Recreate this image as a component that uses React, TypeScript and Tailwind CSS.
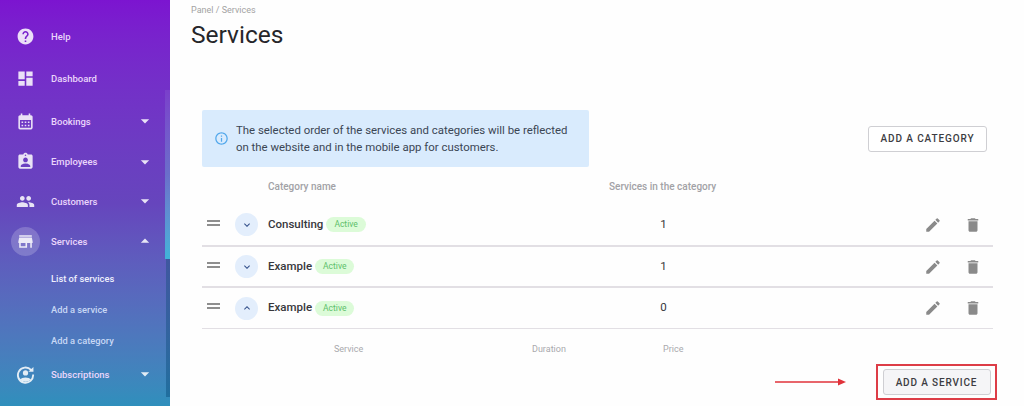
import { MdHelp, MdDashboard, MdCalendarMonth, MdAssignmentInd, MdPeople, MdStore, MdArrowDropDown, MdArrowDropUp, MdEdit, MdDelete, MdExpandMore, MdExpandLess, MdInfoOutline } from "react-icons/md";
import type { ReactNode } from "react";

function NavItem({ icon, label, h, caret, active }: { icon: ReactNode; label: string; h: string; caret?: "down" | "up"; active?: boolean }) {
  return (
    <div className={`flex items-center ${h}`}>
      <div className="w-[51px] flex justify-center shrink-0">
        <div className={`w-[29px] h-[29px] rounded-full flex items-center justify-center text-[19px] text-white/85 ${active ? "bg-white/20" : ""}`}>{icon}</div>
      </div>
      <span className="text-[9.5px] font-medium flex-1 pt-[2px]">{label}</span>
      {caret === "down" && <MdArrowDropDown className="text-[20px] mr-[15px] text-white/85" />}
      {caret === "up" && <MdArrowDropUp className="text-[20px] mr-[15px] text-white/85" />}
    </div>
  );
}

function SubscriptionIcon() {
  return (
    <svg viewBox="0 0 24 24" width="19" height="19" fill="currentColor">
      <path d="M19 6.2A9.6 9.6 0 1 0 21.6 12" fill="none" stroke="currentColor" strokeWidth="2.4" />
      <path d="M15.6 8.6H22V2.4Z" />
      <circle cx="12" cy="10" r="3.3" />
      <path d="M5.2 18.2C7.5 14.8 16.5 14.8 18.8 18.2A9.5 9.5 0 0 1 5.2 18.2Z" />
    </svg>
  );
}

function Row({ name, count, open, h, border, pad }: { name: string; count: string; open?: boolean; h: string; border: string; pad?: string }) {
  return (
    <div className={`flex items-center ${h} ${border} ${pad ?? ""} border-[#e2dfe4]`}>
      <div className="w-[33px] flex flex-col gap-[2px] pl-[5px] -mt-[4px] shrink-0">
        <div className="w-[13px] h-[2px] bg-[#8e8e8e]" />
        <div className="w-[13px] h-[2px] bg-[#8e8e8e]" />
      </div>
      <div className="w-[23px] h-[23px] rounded-full bg-[#e3eefc] flex items-center justify-center text-[#33508a] text-[12px] shrink-0">
        {open ? <MdExpandLess /> : <MdExpandMore />}
      </div>
      <div className="ml-[10px] w-[341px] flex items-center gap-[3px] shrink-0">
        <span className="text-[11.5px] font-medium text-[#37373c]">{name}</span>
        <span className="h-[15px] px-[8px] rounded-full bg-[#dcfbd8] text-[#5cc06a] text-[8.5px] leading-[15px]">Active</span>
      </div>
      <div className="w-[109px] text-center text-[11.5px] text-[#37373c] shrink-0">{count}</div>
      <div className="ml-auto flex items-center gap-[22px] pr-[11px] text-[#8a8a8a] text-[18px]">
        <MdEdit />
        <MdDelete />
      </div>
    </div>
  );
}

export default function App() {
  return (
    <div className="w-[1024px] h-[406px] overflow-hidden flex bg-[#fefefe] font-['Roboto',sans-serif]">
      <aside className="relative w-[170px] h-full shrink-0 pt-[15px] text-[#ead6fb] bg-gradient-to-b from-[#7c14d0] via-[#6645bd] to-[#2f8fbc]">
        <NavItem h="h-[42px]" label="Help" icon={<MdHelp />} />
        <NavItem h="h-[43px]" label="Dashboard" icon={<MdDashboard />} />
        <NavItem h="h-[42px]" label="Bookings" caret="down" icon={<MdCalendarMonth />} />
        <NavItem h="h-[39px]" label="Employees" caret="down" icon={<MdAssignmentInd />} />
        <NavItem h="h-[40px]" label="Customers" caret="down" icon={<MdPeople />} />
        <NavItem h="h-[40px]" label="Services" caret="up" active icon={<MdStore />} />
        <div className="pl-[51px] text-[9.3px] font-medium text-[#c8d8f5] flex flex-col">
          <div className="h-[31px] mt-[2px] flex items-center text-[#eef0fd]">List of services</div>
          <div className="h-[31px] flex items-center">Add a service</div>
          <div className="h-[31px] flex items-center">Add a category</div>
        </div>
        <NavItem h="h-[36px]" label="Subscriptions" caret="down" icon={<SubscriptionIcon />} />
        <div className="absolute right-0 top-[90px] w-[5px] h-[169px] bg-gradient-to-b from-[#7a3fcb] via-[#6a6fca] to-[#3fb4d8]" />
        <div className="absolute right-0 top-[259px] w-[4px] h-[138px] bg-gradient-to-b from-[#3f579f] to-[#206f9f]" />
      </aside>
      <main className="flex-1 min-w-0 pl-[21px] pr-[31px] pt-[6px]">
        <div className="text-[9px] leading-[9px] text-[#a3a3a3]">Panel / Services</div>
        <h1 className="text-[24.5px] leading-[28px] mt-[6px] text-[#26262a]">Services</h1>
        <div className="ml-[11px] mt-[61px]">
          <div className="flex items-center justify-between pr-[6px]">
            <div className="w-[387px] h-[57px] rounded-[2px] bg-[#d9ebfd] flex items-center pl-[12px] pr-[10px] text-[#3b4654]">
              <MdInfoOutline className="text-[15px] text-[#52a8ec] shrink-0" />
              <p className="ml-[7px] text-[11.4px] leading-[17px]">The selected order of the services and categories will be reflected on the website and in the mobile app for customers.</p>
            </div>
            <button className="w-[119px] h-[26px] rounded-[3px] border border-[#cfcfd3] bg-white text-[10px] font-medium tracking-[0.9px] text-[#3c3c42]">ADD A CATEGORY</button>
          </div>
          <div className="flex h-[38px] items-center text-[10px] font-medium text-[#a2a2a6] pt-[1px]">
            <span className="ml-[66px] w-[341px]">Category name</span>
            <span className="w-[107px] text-center whitespace-nowrap">Services in the category</span>
          </div>
          <div className="w-[791px] -mt-[3px]">
            <Row name="Consulting" count="1" h="h-[45px]" border="border-b-[2px]" pad="pt-[2px]" />
            <Row name="Example" count="1" h="h-[41px]" border="border-b-[2px]" />
            <Row name="Example" count="0" open h="h-[41px]" border="border-b" />
          </div>
          <div className="flex h-[40px] items-center text-[9px] text-[#a9a9ad] pt-[1px]">
            <span className="ml-[132px] w-[198px]">Service</span>
            <span className="w-[131px]">Duration</span>
            <span>Price</span>
          </div>
          <div className="flex items-center justify-end -mt-[5px] w-[795px]">
            <svg width="72" height="10" viewBox="0 0 72 10" className="mr-[29px]">
              <path d="M0 5H64" stroke="#e0323a" strokeWidth="1.3" />
              <path d="M63 1.5L71 5L63 8.5Z" fill="#e0323a" />
            </svg>
            <div className="w-[121px] h-[36px] border-2 border-[#dd3d47] flex items-center justify-center">
              <button className="w-[108px] h-[26px] rounded-[3px] border border-[#cfcfd3] bg-[#f5f5f7] text-[10px] font-medium tracking-[0.85px] text-[#3c3c42]">ADD A SERVICE</button>
            </div>
          </div>
        </div>
      </main>
    </div>
  );
}
